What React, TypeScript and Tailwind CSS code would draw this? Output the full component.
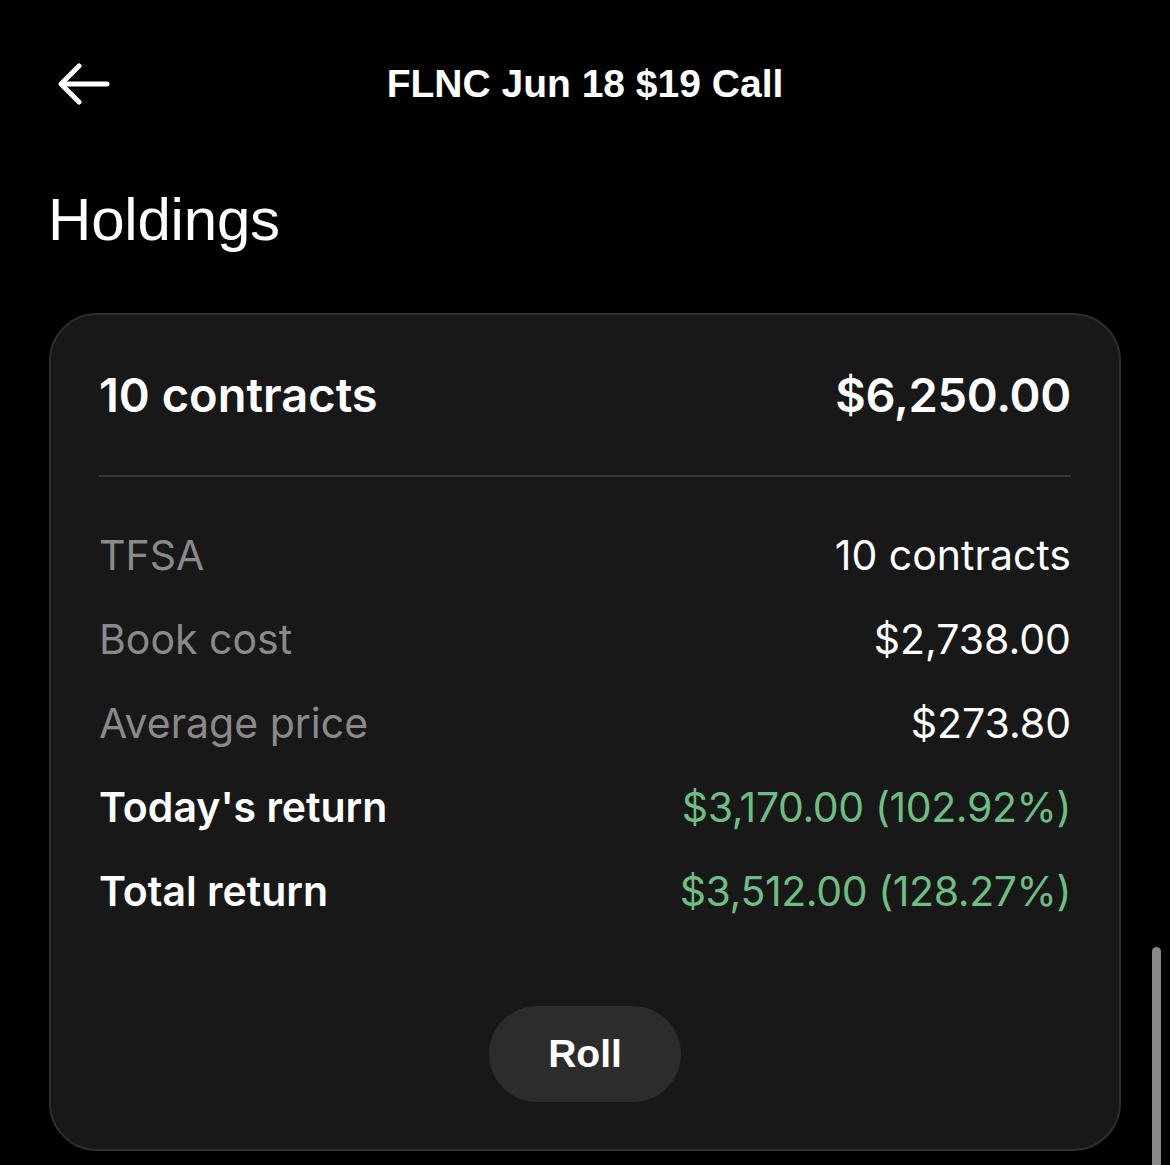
export default function App() {
  const rows = [
    { label: "TFSA", value: "10 contracts", strong: false, green: false },
    { label: "Book cost", value: "$2,738.00", strong: false, green: false },
    { label: "Average price", value: "$273.80", strong: false, green: false },
    { label: "Today's return", value: "$3,170.00 (102.92%)", strong: true, green: true },
    { label: "Total return", value: "$3,512.00 (128.27%)", strong: true, green: true },
  ];

  return (
    <div className="relative min-h-[1165px] w-[1170px] overflow-hidden bg-black text-white">
      {/* top bar */}
      <header className="relative mt-[60px] flex h-[48px] items-center">
        <svg
          className="absolute left-[58px] top-[3px]"
          width="52"
          height="42"
          viewBox="0 0 52 42"
          fill="none"
          stroke="white"
          strokeWidth="5"
          strokeLinecap="round"
          strokeLinejoin="round"
        >
          <path d="M4 21H49" />
          <path d="M21 3L3 21L21 39" />
        </svg>
        <h1 className="w-full text-center font-['Liberation_Sans',sans-serif] text-[39px] font-bold tracking-[0px]">
          FLNC Jun 18 $19 Call
        </h1>
      </header>

      <h2 className="ml-[48px] mt-[76px] font-['Liberation_Sans',sans-serif] text-[60px] leading-[72px] tracking-[-0.2px]">
        Holdings
      </h2>

      <section className="ml-[49px] mt-[57px] w-[1072px] rounded-[48px] border-2 border-[#2e2e2e] bg-[#181818] px-[48px] pb-[47px] font-['Inter',sans-serif]">
        <div className="flex h-[160px] items-center justify-between">
          <span className="text-[47px] font-semibold tracking-[0px]">10 contracts</span>
          <span className="text-[47px] font-semibold tracking-[-0.3px]">$6,250.00</span>
        </div>
        <div className="h-[2px] bg-[#383838]" />
        <div className="flex flex-col pt-[37px]">
          {rows.map((row) => (
            <div key={row.label} className="flex h-[84px] items-center justify-between text-[41px]">
              <span className={row.strong ? "font-semibold text-white" : "text-[#8a8a8a]"}>{row.label}</span>
              <span className={row.green ? "tracking-[-0.4px] text-[#6cbf80]" : "text-white"}>{row.value}</span>
            </div>
          ))}
        </div>
        <div className="mt-[72px] flex justify-center">
          <button
            type="button"
            className="flex h-[96px] w-[192px] items-center justify-center rounded-full bg-[#2c2c2c] font-['Liberation_Sans',sans-serif] text-[39px] font-bold"
          >
            Roll
          </button>
        </div>
      </section>

      <div className="absolute left-[1152px] top-[947px] h-[240px] w-[9px] rounded-full bg-[#888888]" />
    </div>
  );
}
